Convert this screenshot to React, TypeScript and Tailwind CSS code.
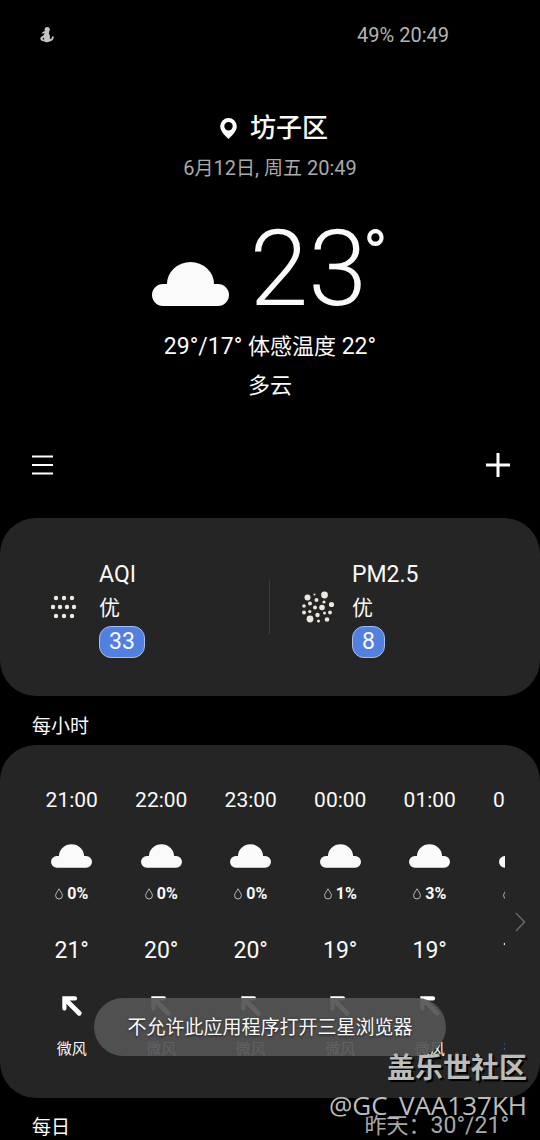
const HOURS = [
  { time: "21:00", rain: "0%", temp: "21°", wind: "微风" },
  { time: "22:00", rain: "0%", temp: "20°", wind: "微风" },
  { time: "23:00", rain: "0%", temp: "20°", wind: "微风" },
  { time: "00:00", rain: "1%", temp: "19°", wind: "微风" },
  { time: "01:00", rain: "3%", temp: "19°", wind: "微风" },
  { time: "02:00", rain: "3%", temp: "19°", wind: "微风" },
];

// x, y, radius of every particle in the PM2.5 icon
const PARTICLES = [
  [5.5, 6.5, 3], [12.5, 3.5, 1], [22.5, 4, 3.4], [14.5, 9, 2],
  [8, 12.5, 2], [22, 11, 1.6], [29.5, 13.5, 2.6], [2, 15, 1.8],
  [13, 16.5, 2], [20, 16.5, 2.8], [2, 21.5, 2], [7.8, 20.5, 1.6],
  [15.5, 24, 2.2], [22.5, 22, 1.5], [28, 21.5, 1.9], [8, 28, 3.4],
  [16.5, 30, 1.5], [25, 28.5, 2.3],
];

const DOTS = [
  [5, 3], [13, 3], [21, 3],
  [2, 12], [9, 12], [16, 12], [23, 12],
  [5, 21], [13, 21], [21, 21],
];

function Cloud({ className }: { className: string }) {
  return (
    <svg className={className} viewBox="0 0 77 44" fill="#fafafa" aria-hidden="true">
      <path d="M11 44A11 11 0 0 1 11 22H15A23.5 22 0 0 1 62 22H66A11 11 0 0 1 66 44Z" />
    </svg>
  );
}

function StatusBar() {
  return (
    <div className="flex h-[70px] items-center justify-between pl-10 pr-[91px] text-[20px] text-[#b4b4b4]">
      <svg width="14" height="16" viewBox="0 0 14 16" fill="#c4c4c4" aria-hidden="true">
        <circle cx="7.2" cy="2.6" r="2.6" />
        <path d="M5.2 4 9.4 4.4 8.8 6.2 C9.8 7.6 10.2 9.6 9.9 12.2 C11.4 11.8 12.2 10.8 12.2 9.2 L13.8 9.4 C13.8 12.4 12 14 9.6 14.6 C8 15.6 5.6 15.4 4.6 14.4 C2.4 14.4 .6 13.2 .2 11.4 C1 9.8 2.2 9.2 3.4 8.6 C3.8 7.6 4.4 7 5 6.6 L1.8 6.4 C2.4 4.8 3.8 4.2 5.2 4Z" />
        <path d="M2.2 12 4 10.6 4.2 12.8Z" fill="#000" />
      </svg>
      <span>49% 20:49</span>
    </div>
  );
}

function CurrentWeather() {
  return (
    <section className="flex flex-col items-center pt-10">
      <h1 className="flex h-9 items-center gap-[13px] pl-2 text-[26px] font-medium">
        <svg width="17" height="21" viewBox="0 0 17 21" fill="none" aria-hidden="true">
          <path
            fill="#fff"
            fillRule="evenodd"
            d="M8.5 0A8.3 8.3 0 0 1 16.8 8.3C16.8 13.5 11.5 18 8.5 21C5.5 18 .2 13.5 .2 8.3A8.3 8.3 0 0 1 8.5 0ZM8.5 4.1A4.2 4.2 0 1 0 8.5 12.5A4.2 4.2 0 1 0 8.5 4.1Z"
          />
        </svg>
        坊子区
      </h1>
      <p className="mt-2 text-[20px] leading-7 text-[#aaaaaa]">
        6<span className="text-[19px]">月</span>12<span className="text-[19px]">日</span>,{" "}
        <span className="text-[19px]">周五</span> 20:49
      </p>
      <div className="mt-7 flex items-end gap-5">
        <Cloud className="mb-[21px] h-11 w-[77px]" />
        <div className="flex items-start text-[106px] font-light leading-[116px] text-[#fafafa]">
          23
          <span className="-ml-1 text-[66px] font-normal leading-[88px]">°</span>
        </div>
      </div>
      <p className="mt-1 text-[23px] leading-8">
        29°/17° <span className="text-[22px]">体感温度</span> 22°
      </p>
      <p className="mt-[9px] text-[22px] leading-7">多云</p>
    </section>
  );
}

function AirItem({ name, value, children }: { name: string; value: string; children: React.ReactNode }) {
  return (
    <div className="flex items-center">
      {children}
      <div className="flex flex-col items-start pt-0.5 text-[#fafafa]">
        <h2 className="text-[23px] leading-8">{name}</h2>
        <p className="text-[21px] leading-[35px]">优</p>
        <span className="rounded-xl border border-[#a9bdea] bg-[#527fe0] px-[9px] text-[23px] leading-[30px]">{value}</span>
      </div>
    </div>
  );
}

function AirQuality() {
  return (
    <section className="mt-[33px] grid h-[178px] grid-cols-2 rounded-[36px] bg-[#252525] py-9">
      <div className="flex items-center justify-between pl-[51px]">
        <AirItem name="AQI" value="33">
          <svg className="mr-[22px]" width="26" height="24" viewBox="0 0 26 24" fill="#efe9e0" aria-hidden="true">
            {DOTS.map(([x, y]) => (
              <circle key={`${x}-${y}`} cx={x} cy={y} r="2.2" />
            ))}
          </svg>
        </AirItem>
        <div className="h-[54px] w-px bg-[#3c3c3c]" />
      </div>
      <div className="flex items-center pl-8">
        <AirItem name="PM2.5" value="8">
          <svg className="mr-[17px]" width="33" height="32" viewBox="0 0 33 32" fill="#efe6dd" aria-hidden="true">
            {PARTICLES.map(([x, y, r]) => (
              <circle key={`${x}-${y}`} cx={x} cy={y} r={r} />
            ))}
          </svg>
        </AirItem>
      </div>
    </section>
  );
}

function Hourly() {
  return (
    <section>
      <h2 className="px-8 pt-[17px] pb-1 text-[19px] leading-7">每小时</h2>
      <div className="flex h-[353px] items-center rounded-[36px] bg-[#252525] pl-[27px]">
        <div className="h-full flex-1 overflow-hidden">
          <ul className="grid w-[537px] grid-cols-6 pt-10 text-[#fafafa]">
            {HOURS.map((hour) => (
              <li key={hour.time} className="flex flex-col items-center">
                <span className="text-[21px] leading-[30px]">{hour.time}</span>
                <Cloud className="mt-[29px] h-6 w-[41px]" />
                <span className="mt-4 flex items-center gap-1 text-[16px] font-bold leading-5">
                  <svg width="8" height="12" viewBox="0 0 8 12" fill="none" stroke="#c8c8c8" strokeWidth="0.9" aria-hidden="true">
                    <path d="M4 .8C3 3 .6 5.2 .6 7.6A3.4 3.4 0 0 0 7.4 7.6C7.4 5.2 5 3 4 .8Z" />
                  </svg>
                  {hour.rain}
                </span>
                <span className="mt-[31px] text-[23px] leading-8">{hour.temp}</span>
                <svg className="mt-[29px]" width="20" height="20" viewBox="0 0 20 20" fill="none" stroke="#fff" aria-hidden="true">
                  <path strokeWidth="4.2" strokeLinecap="round" d="M2.4 12.6V2.4H13" />
                  <path strokeWidth="4.8" strokeLinecap="round" d="M3.6 3.6 17.2 17.2" />
                </svg>
                <span className="mt-[21px] text-[15px] leading-6">{hour.wind}</span>
              </li>
            ))}
          </ul>
        </div>
        <button type="button" aria-label="更多" className="flex w-[35px] pl-[9px]">
          <svg width="12" height="20" viewBox="0 0 12 20" fill="none" stroke="#6a6a6a" strokeWidth="1.4">
            <path d="M2 1 10.5 10 2 19" />
          </svg>
        </button>
      </div>
    </section>
  );
}

export default function App() {
  return (
    <main
      lang="zh-CN"
      className="relative min-h-screen overflow-hidden bg-black font-[Roboto,'Noto_Sans_CJK_SC',sans-serif] text-[#fafafa]"
    >
      <StatusBar />
      <CurrentWeather />
      <nav className="mt-[45px] flex h-10 items-center justify-between pl-8 pr-[30px]">
        <button type="button" aria-label="菜单">
          <svg width="21" height="20" viewBox="0 0 21 20" stroke="#fff" strokeWidth="2.2">
            <path d="M0 1.5H21M0 10H21M0 18.5H21" />
          </svg>
        </button>
        <button type="button" aria-label="添加">
          <svg width="24" height="24" viewBox="0 0 24 24" stroke="#fff" strokeWidth="3">
            <path d="M0 12H24M12 0V24" />
          </svg>
        </button>
      </nav>
      <AirQuality />
      <Hourly />
      <section className="flex items-start justify-between pl-8 pr-[31px] pt-[18px]">
        <h2 className="text-[19px] leading-6">每日</h2>
        <p className="text-[22px] leading-5 text-[#a8a8a8]">
          昨天：<span className="text-[23px]">30°/21°</span>
        </p>
      </section>

      {/* Toast */}
      <div className="absolute inset-x-0 bottom-[84px] flex justify-center">
        <div role="status" className="rounded-full bg-[#545454]/92 px-[33px] pt-4 pb-[14px] text-[19px] leading-7 [text-shadow:0_1px_3px_#000000aa]">
          不允许此应用程序打开三星浏览器
        </div>
      </div>

      {/* Watermark */}
      <div className="absolute right-[13px] bottom-[17px] flex flex-col items-end text-[#bcbcbc] [text-shadow:2px_2px_1px_#000]">
        <span className="text-[28px] font-bold leading-9">盖乐世社区</span>
        <span className="font-['Open_Sans','Noto_Sans',sans-serif] text-[26px] leading-9">@GC_VAA137KH</span>
      </div>
    </main>
  );
}
